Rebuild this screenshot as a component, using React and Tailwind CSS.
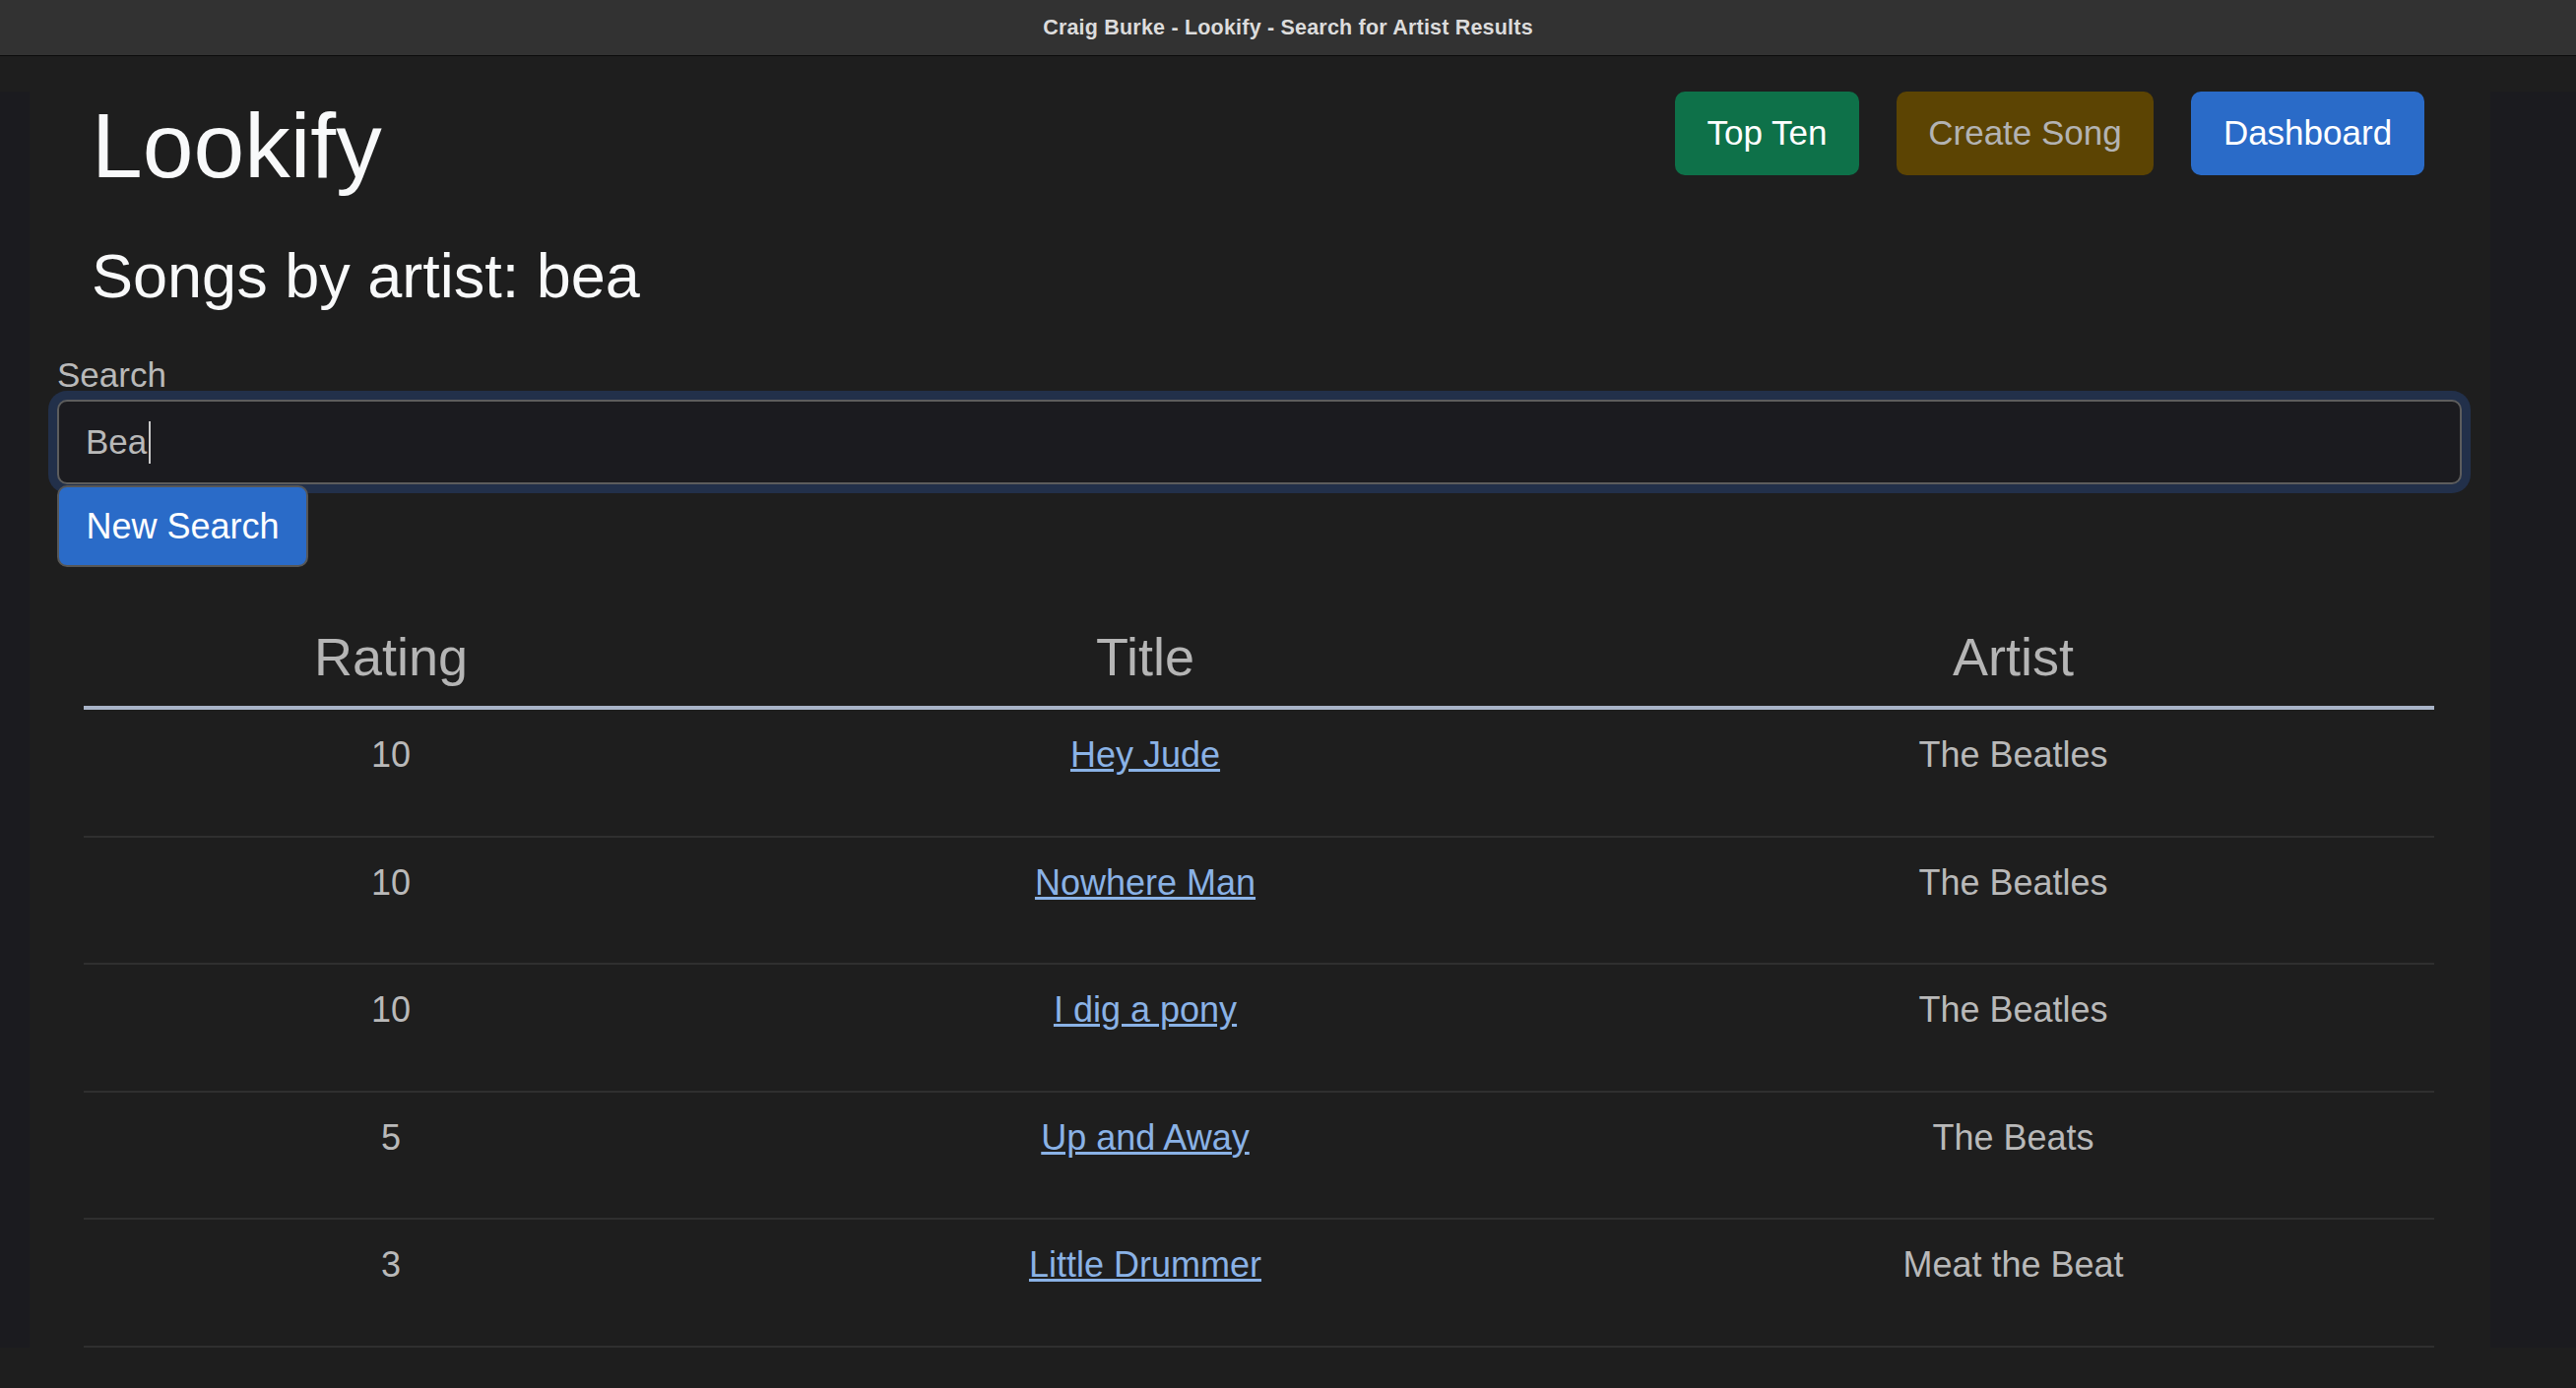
import React from "react";

const rows = [
  { rating: "10", title: "Hey Jude", artist: "The Beatles" },
  { rating: "10", title: "Nowhere Man", artist: "The Beatles" },
  { rating: "10", title: "I dig a pony", artist: "The Beatles" },
  { rating: "5", title: "Up and Away", artist: "The Beats" },
  { rating: "3", title: "Little Drummer", artist: "Meat the Beat" },
];

export default function App() {
  return (
    <div className="w-[2616px] h-[1410px] overflow-hidden bg-[#1e1e1e] font-['Liberation_Sans',Arial,sans-serif]">
      {/* window title bar */}
      <div className="h-[57px] bg-[#323232] border-b border-[#0b0b0b] flex items-center justify-center">
        <span className="text-[21.5px] font-bold text-[#dcdcdc] tracking-[0.2px]">
          Craig Burke - Lookify - Search for Artist Results
        </span>
      </div>

      <div className="pt-[36px] flex">
        <div className="w-[30px] bg-[#1b1b1f]" />
        <div className="w-[2499px] px-[28px]">
          {/* header */}
          <div className="flex items-start justify-between pl-[35px] pr-[39px]">
            <h1 className="text-[93px] leading-[110px] text-[#f8f9fa] font-normal">Lookify</h1>
            <div className="flex gap-[38px]">
              <button className="w-[187px] h-[85px] rounded-[10px] bg-[#0e7149] text-white text-[35px]">
                Top Ten
              </button>
              <button className="w-[261px] h-[85px] rounded-[10px] bg-[#5c4403] text-[#b3b3b3] text-[35px]">
                Create Song
              </button>
              <button className="w-[237px] h-[85px] rounded-[10px] bg-[#2a6bc8] text-white text-[35px]">
                Dashboard
              </button>
            </div>
          </div>

          <h3 className="mt-[39px] pl-[35px] text-[63px] leading-[76px] text-[#f8f9fa] font-medium">
            Songs by artist: bea
          </h3>

          <div className="mt-[37px] text-[35px] leading-[51px] text-[#b9b9b9]">Search</div>
          <div className="h-[86px] w-[2442px] rounded-[10px] border-2 border-[#5d5d5d] bg-[#1b1b1f] shadow-[0_0_0_9px_#22304a] flex items-center pl-[27px]">
            <span className="text-[35px] text-[#b9b9b9]">Bea</span>
            <span className="ml-[2px] w-[2px] h-[43px] bg-[#c8c8c8]" />
          </div>
          <button className="mt-[1px] w-[255px] h-[83px] rounded-[10px] border-2 border-[#575757] bg-[#2a6bc8] text-white text-[36px] relative z-10">
            New Search
          </button>

          {/* table */}
          <div className="mt-[42px] ml-[27px] w-[2387px]">
            <div className="grid grid-cols-[624px_908px_855px] border-b-4 border-[#a9b4c8] h-[103px] box-border">
              {["Rating", "Title", "Artist"].map((h) => (
                <div key={h} className="text-center text-[54px] leading-[65px] pt-[17px] text-[#b5b5b5]">
                  {h}
                </div>
              ))}
            </div>
            {rows.map((r, i) => (
              <div
                key={i}
                className="grid grid-cols-[624px_908px_855px] border-b-2 border-[#2f2f2f] h-[129.5px] box-border text-[36px] leading-[54px]"
              >
                <div className="text-center pt-[19px] text-[#b9b9b9]">{r.rating}</div>
                <div className="text-center pt-[19px]">
                  <a href="#" className="text-[#8ab2e6] underline">
                    {r.title}
                  </a>
                </div>
                <div className="text-center pt-[19px] text-[#b9b9b9]">{r.artist}</div>
              </div>
            ))}
          </div>
        </div>
        <div className="flex-1 bg-[#1b1b1f]" />
      </div>
    </div>
  );
}
